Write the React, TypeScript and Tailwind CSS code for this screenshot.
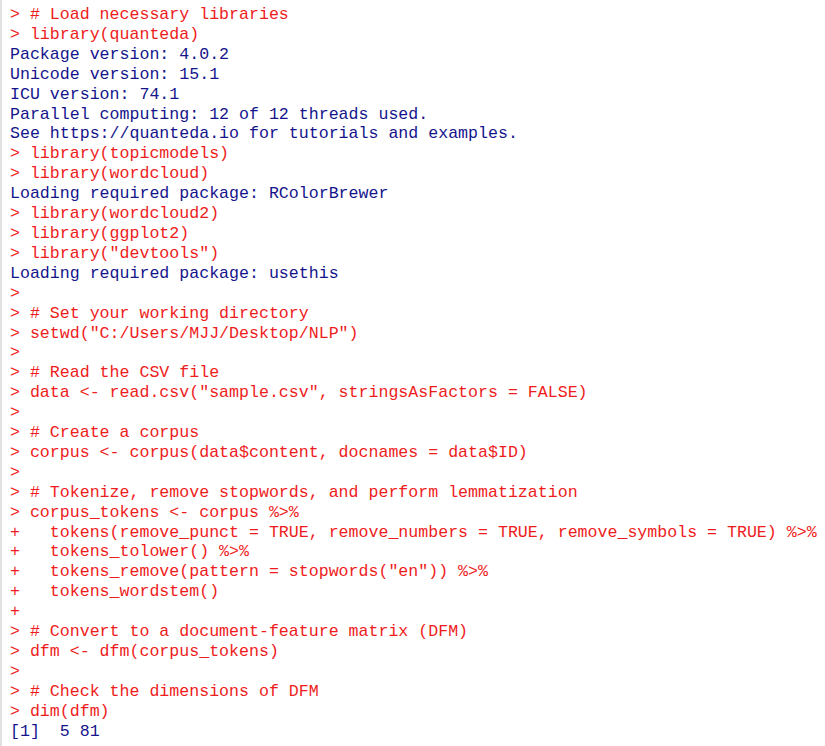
const RED = 'text-[#ee1c1c]';
const BLUE = 'text-[#14148c]';

type Line = { t: string; out?: boolean };

const lines: Line[] = [
  { t: '> # Load necessary libraries' },
  { t: '> library(quanteda)' },
  { t: 'Package version: 4.0.2', out: true },
  { t: 'Unicode version: 15.1', out: true },
  { t: 'ICU version: 74.1', out: true },
  { t: 'Parallel computing: 12 of 12 threads used.', out: true },
  { t: 'See https://quanteda.io for tutorials and examples.', out: true },
  { t: '> library(topicmodels)' },
  { t: '> library(wordcloud)' },
  { t: 'Loading required package: RColorBrewer', out: true },
  { t: '> library(wordcloud2)' },
  { t: '> library(ggplot2)' },
  { t: '> library("devtools")' },
  { t: 'Loading required package: usethis', out: true },
  { t: '> ' },
  { t: '> # Set your working directory' },
  { t: '> setwd("C:/Users/MJJ/Desktop/NLP")' },
  { t: '> ' },
  { t: '> # Read the CSV file' },
  { t: '> data <- read.csv("sample.csv", stringsAsFactors = FALSE)' },
  { t: '> ' },
  { t: '> # Create a corpus' },
  { t: '> corpus <- corpus(data$content, docnames = data$ID)' },
  { t: '> ' },
  { t: '> # Tokenize, remove stopwords, and perform lemmatization' },
  { t: '> corpus_tokens <- corpus %>%' },
  { t: '+   tokens(remove_punct = TRUE, remove_numbers = TRUE, remove_symbols = TRUE) %>%' },
  { t: '+   tokens_tolower() %>%' },
  { t: '+   tokens_remove(pattern = stopwords("en")) %>%' },
  { t: '+   tokens_wordstem()' },
  { t: '+ ' },
  { t: '> # Convert to a document-feature matrix (DFM)' },
  { t: '> dfm <- dfm(corpus_tokens)' },
  { t: '> ' },
  { t: '> # Check the dimensions of DFM' },
  { t: '> dim(dfm)' },
  { t: '[1]  5 81', out: true },
];

export default function App() {
  return (
    <div className="w-[825px] h-[746px] overflow-hidden bg-white border-l-2 border-[#e2e2e2]">
      <pre className="pl-[8px] pt-[5px] m-0 font-['Liberation_Mono','Courier_New',monospace] text-[16.6px] leading-[19.9px]">
        {lines.map((l, i) => (
          <div key={i} className={l.out ? BLUE : RED}>
            {l.t}
          </div>
        ))}
      </pre>
    </div>
  );
}
